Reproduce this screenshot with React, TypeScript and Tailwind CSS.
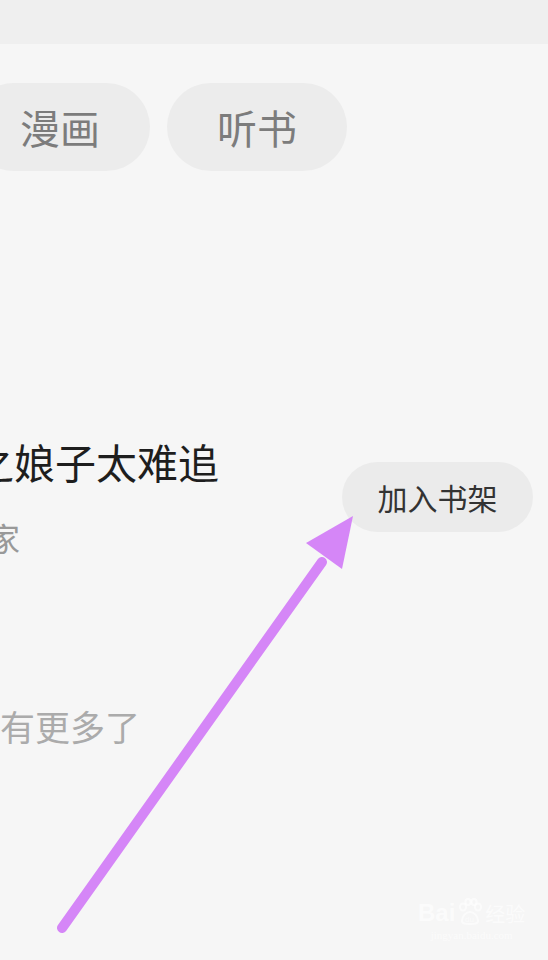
import React from "react";

const cjk = { fontFamily: '"Noto Sans CJK SC", "Noto Sans", sans-serif' };

function Pill({ label, className = "" }: { label: string; className?: string }) {
  return (
    <div
      className={`flex h-[88px] w-[180px] shrink-0 items-center justify-center rounded-full bg-[#ececec] text-[40px] text-[#7c7c7c] ${className}`}
    >
      {label}
    </div>
  );
}

function Watermark() {
  return (
    <div className="absolute left-[418px] top-[898px] flex flex-col items-center text-white/60">
      <div className="flex items-end gap-[2px]">
        <span className="text-[24px] font-bold leading-[26px]" style={{ fontFamily: '"Liberation Sans", sans-serif' }}>
          Bai
        </span>
        <svg width="26" height="28" viewBox="0 0 26 28" fill="none" stroke="white" strokeOpacity="0.6" strokeWidth="2">
          <ellipse cx="6" cy="9" rx="3" ry="3.5" />
          <ellipse cx="11" cy="4" rx="2.6" ry="3" />
          <ellipse cx="17" cy="4" rx="2.6" ry="3" />
          <ellipse cx="21" cy="9" rx="3" ry="3.5" />
          <path d="M5 23c0-5 4-9 8-9s8 4 8 9c0 3-4 3-8 3s-8 0-8-3z" />
          <text x="8" y="24" fontSize="8" fill="white" fillOpacity="0.6" stroke="none" fontFamily="Liberation Sans, sans-serif">du</text>
        </svg>
        <span className="text-[20px] leading-[24px]" style={cjk}>
          经验
        </span>
      </div>
      <span className="mt-[3px] text-[11px] leading-[12px]" style={{ fontFamily: '"Liberation Serif", serif' }}>
        jingyan.baidu.com
      </span>
    </div>
  );
}

export default function App() {
  return (
    <div className="relative h-[960px] w-[548px] overflow-hidden bg-[#f6f6f6]" style={cjk}>
      {/* top strip */}
      <div className="h-[44px] w-full bg-[#efefef]" />

      {/* category chips */}
      <div className="ml-[-30px] mt-[39px] flex gap-[17px]">
        <Pill label="漫画" />
        <Pill label="听书" />
      </div>

      {/* book row */}
      <div className="mt-[266px] flex items-center justify-between pr-[15px]">
        <div className="flex flex-col">
          <span className="ml-[-27px] whitespace-nowrap text-[41px] leading-[49px] text-[#1e1e1e]">之娘子太难追</span>
          <span className="ml-[-44px] mt-[31px] whitespace-nowrap text-[32px] leading-[40px] text-[#999999]">作家</span>
        </div>
        <button className="flex h-[70px] w-[191px] items-center justify-center rounded-full bg-[#ebebeb] text-[30px] text-[#333333]">
          加入书架
        </button>
      </div>

      {/* end of list */}
      <div className="ml-[-35px] mt-[149px] whitespace-nowrap text-[35px] leading-[40px] text-[#ababab]">没有更多了</div>

      {/* annotation arrow */}
      <svg className="pointer-events-none absolute left-0 top-0" width="548" height="960" viewBox="0 0 548 960">
        <line x1="62" y1="928" x2="322" y2="562" stroke="#d586f7" strokeWidth="10" strokeLinecap="round" />
        <polygon points="306,543 353,516 342,569" fill="#d586f7" />
      </svg>

      <Watermark />
    </div>
  );
}
